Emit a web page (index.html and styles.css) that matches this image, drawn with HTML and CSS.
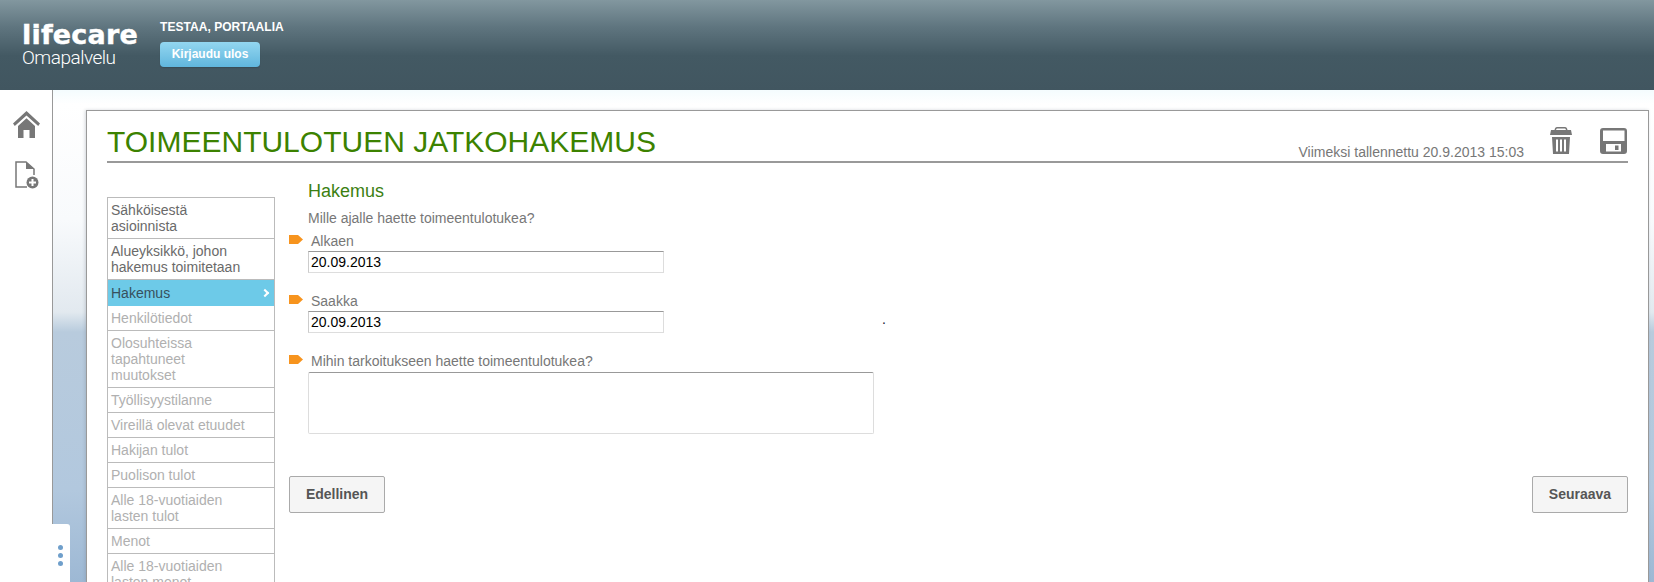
FILE: index.html
```html
<!DOCTYPE HTML>
<html lang="fi">
    <head>
        <meta charset="UTF-8">
        <title>Toimeentulotuen jatkohakemus</title>
        <link rel="stylesheet" href="styles.css">
    </head>
    <body>
        <div class="top">
            <div class="logo">
                <div class="logo-name">lifecare</div>
                <div class="logo-sub">Omapalvelu</div>
            </div>
            <div class="user">
                <div class="user-name">TESTAA, PORTAALIA</div>
                <a class="logout" href="#">Kirjaudu ulos</a>
            </div>
        </div>
        <div class="main">
            <div class="side">
                <a class="side-icon" href="#">
                    <svg width="27" height="27" viewBox="0 0 27 27"><path d="M13.5 0L27 12.5 25.2 15 13.5 4.4 1.8 15 0 12.5Z"/><path d="M5 15L13.5 7.2 22 15V27H16.5V19H10.5V27H5Z"/></svg>
                </a>
                <a class="side-icon side-icon-new" href="#">
                    <svg width="25" height="30" viewBox="0 0 25 30"><path class="line" d="M13 27H2V2H12L20 9V15"/><path d="M12 2L20 9H12Z"/><circle cx="18.5" cy="22.5" r="6"/><path class="plus" d="M18.5 19V26M15 22.5H22"/></svg>
                </a>
            </div>
            <div class="stage">
                <div class="card">
                    <div class="card-head">
                        <h1>TOIMEENTULOTUEN JATKOHAKEMUS</h1>
                        <span class="saved">Viimeksi tallennettu 20.9.2013 15:03</span>
                        <a class="tool tool-trash" href="#">
                            <svg width="22" height="27" viewBox="0 0 22 27"><path d="M7 0H15Q17 0 17.500 3H21L22 8H0L1 3H4.500Q5 0 7 0ZM7 1.500Q6.300 1.500 6 3H16Q15.700 1.500 15 1.500Z" fill-rule="evenodd"/><path d="M2 10H20L19 27H3ZM6 12.500V24.500H8V12.500ZM10 12.500V24.500H12V12.500ZM14 12.500V24.500H16V12.500Z" fill-rule="evenodd"/></svg>
                        </a>
                        <a class="tool tool-save" href="#">
                            <svg width="27" height="26" viewBox="0 0 27 26"><path d="M3 0H24Q27 0 27 3V23Q27 26 24 26H3Q0 26 0 23V3Q0 0 3 0ZM3 2.500V13H24.500V2.500ZM6 16V23.500H21V16ZM15 17.500H18.500V22H15Z" fill-rule="evenodd"/></svg>
                        </a>
                    </div>
                    <div class="card-body">
                        <ul class="nav">
                            <li>Sähköisestä asioinnista</li>
                            <li>Alueyksikkö, johon hakemus toimitetaan</li>
                            <li class="active">Hakemus</li>
                            <li class="off">Henkilötiedot</li>
                            <li class="off">Olosuhteissa tapahtuneet muutokset</li>
                            <li class="off">Työllisyystilanne</li>
                            <li class="off">Vireillä olevat etuudet</li>
                            <li class="off">Hakijan tulot</li>
                            <li class="off">Puolison tulot</li>
                            <li class="off">Alle 18-vuotiaiden lasten tulot</li>
                            <li class="off">Menot</li>
                            <li class="off">Alle 18-vuotiaiden lasten menot</li>
                        </ul>
                        <div class="form">
                            <h2>Hakemus</h2>
                            <p class="question">Mille ajalle haette toimeentulotukea?</p>
                            <label class="title" for="alkaen"><svg class="mark" width="14" height="9" viewBox="0 0 14 9"><path d="M0 0H9L14 4.500 9 9H0Z"/></svg>Alkaen</label>
                            <div class="field">
                                <input class="ipt" type="text" id="alkaen" value="20.09.2013">
                            </div>
                            <label class="title" for="saakka"><svg class="mark" width="14" height="9" viewBox="0 0 14 9"><path d="M0 0H9L14 4.500 9 9H0Z"/></svg>Saakka</label>
                            <div class="field">
                                <input class="ipt" type="text" id="saakka" value="20.09.2013">
                                <span class="stray">.</span>
                            </div>
                            <label class="title title-area" for="tarkoitus"><svg class="mark" width="14" height="9" viewBox="0 0 14 9"><path d="M0 0H9L14 4.500 9 9H0Z"/></svg>Mihin tarkoitukseen haette toimeentulotukea?</label>
                            <textarea class="area" id="tarkoitus"></textarea>
                            <div class="buttons">
                                <a class="btn" href="#">Edellinen</a>
                                <a class="btn" href="#">Seuraava</a>
                            </div>
                        </div>
                    </div>
                </div>
            </div>
            <div class="pull"><span></span><span></span><span></span></div>
        </div>
    </body>
</html>
```

FILE: styles.css
```css
html,body{
margin: 0;
padding: 0;
height: 582px;
overflow: hidden;
background-color: #fff;
font-family: "Liberation Sans", Arial, sans-serif;
font-size: 14px;
color: #666;
}
a{
text-decoration: none;
}
.top{
height: 90px;
box-sizing: border-box;
padding: 20px 0 0 22px;
display: flex;
background: linear-gradient(to bottom, #82979f 0%, #5f757f 30%, #435963 62%, #415660 100%);
}
.logo{
width: 138px;
color: #fff;
}
.logo-name{
font-family: "DejaVu Sans", "Liberation Sans", sans-serif;
font-size: 27px;
line-height: 29px;
font-weight: bold;
letter-spacing: 0.2px;
-webkit-text-stroke: 0.4px #fff;
}
.logo-sub{
font-family: Roboto, "Liberation Sans", sans-serif;
font-weight: 300;
font-size: 19px;
line-height: 18px;
letter-spacing: -0.5px;
}
.user-name{
color: #fff;
font-weight: bold;
font-size: 12px;
line-height: 14px;
letter-spacing: 0.05px;
margin-bottom: 8px;
}
.logout{
display: block;
width: 100px;
height: 25px;
line-height: 25px;
text-align: center;
font-size: 12px;
font-weight: bold;
color: #fff;
border-radius: 4px;
background: linear-gradient(to bottom, #93d6f0, #60b6dd);
box-shadow: 0 1px 1px rgba(40, 60, 70, 0.4);
}
.main{
position: relative;
display: flex;
height: 492px;
}
.side{
width: 53px;
height: 434px;
flex: none;
box-sizing: border-box;
border-right: 1px solid #999;
padding: 21px 0 0 13px;
background-color: #fff;
}
.side-icon{
display: block;
height: 27px;
}
.side-icon svg{
display: block;
fill: #777;
}
.side-icon-new{
margin: 22px 0 0 1px;
}
.side-icon-new .line{
fill: none;
stroke: #777;
stroke-width: 1.5;
}
.side-icon-new .plus{
fill: none;
stroke: #fff;
stroke-width: 2;
}
.stage{
flex: 1;
min-width: 0;
padding: 20px 5px 0 33px;
background: linear-gradient(to bottom, #f4fcfe 0px, #ffffff 14px, #f8fafc 130px, #e2e9ef 222px, #b8cbdd 242px, #b2c8de 400px, #9db8d4 492px);
}
.card{
height: 472px;
box-sizing: border-box;
padding: 0 20px;
background-color: #fff;
border: 1px solid #999;
border-bottom: none;
box-shadow: -1px 0 3px rgba(120, 130, 140, 0.3);
overflow: hidden;
}
.card-head{
display: flex;
align-items: flex-end;
height: 50px;
border-bottom: 2px solid #999;
}
h1{
margin: 0 auto 0 0;
font-size: 30px;
line-height: 36px;
font-weight: normal;
color: #3c8200;
padding-bottom: 1px;
}
.saved{
color: #777;
line-height: 16px;
margin-bottom: 1px;
margin-right: 2px;
}
.tool{
display: block;
margin-left: 26px;
padding-bottom: 7px;
}
.tool-trash{
margin-left: 24px;
margin-right: 2px;
}
.tool-save{
margin-right: 1px;
}
.tool svg{
display: block;
fill: #777;
}
.card-body{
display: flex;
padding-top: 17px;
}
.nav{
list-style: none;
margin: 17px 14px 0 0;
padding: 0;
width: 168px;
box-sizing: border-box;
flex: none;
border: 1px solid #bbb;
border-bottom: none;
}
.nav li{
padding: 4px 24px 4px 3px;
line-height: 16px;
border-bottom: 1px solid #bbb;
color: #6a6a6a;
}
.nav .off{
color: #b0b0b0;
}
.nav .active{
position: relative;
background-color: #6dcae8;
color: #37505c;
border-bottom: none;
padding: 5px 24px 5px 3px;
}
.nav .active:after{
content: "";
position: absolute;
right: 6px;
top: 10px;
width: 4px;
height: 4px;
border-top: 2px solid #fff;
border-right: 2px solid #fff;
transform: rotate(45deg);
}
.form{
flex: 1;
min-width: 0;
}
h2{
margin: 0 0 8px 19px;
font-size: 18px;
line-height: 22px;
font-weight: normal;
color: #3c7f12;
}
.question{
margin: 0 0 7px 19px;
line-height: 16px;
color: #777;
}
.title{
display: flex;
height: 16px;
line-height: 16px;
margin-bottom: 2px;
color: #777;
}
.title-area{
margin-bottom: 3px;
}
.mark{
flex: none;
margin: 2px 8px 0 0;
fill: #f7941e;
}
.field{
display: flex;
align-items: flex-start;
height: 22px;
margin: 0 0 20px 19px;
}
.ipt{
display: block;
width: 356px;
height: 22px;
box-sizing: border-box;
margin: 0;
padding: 0 2px;
outline: none;
border: 1px solid #ddd;
border-top-color: #999;
border-left-color: #ccc;
border-radius: 0;
font-family: inherit;
font-size: 14px;
color: #000;
}
.stray{
margin-left: 218px;
line-height: 16px;
color: #223;
}
.area{
display: block;
width: 566px;
height: 62px;
box-sizing: border-box;
margin: 0 0 42px 19px;
padding: 2px;
outline: none;
resize: none;
border: 1px solid #ddd;
border-top-color: #999;
border-radius: 2px;
font-family: inherit;
font-size: 14px;
}
.buttons{
display: flex;
justify-content: space-between;
}
.btn{
display: block;
width: 96px;
height: 37px;
box-sizing: border-box;
line-height: 35px;
text-align: center;
font-weight: bold;
color: #555;
background-color: #f5f5f5;
border: 1px solid #aaa;
border-radius: 2px;
}
.pull{
position: absolute;
left: 0;
top: 434px;
width: 70px;
height: 58px;
box-sizing: border-box;
padding: 21px 0 0 58px;
background-color: #fff;
border-top-right-radius: 3px;
}
.pull span{
display: block;
width: 5px;
height: 5px;
margin-bottom: 3px;
border-radius: 50%;
background-color: #6f9fcb;
}
```
